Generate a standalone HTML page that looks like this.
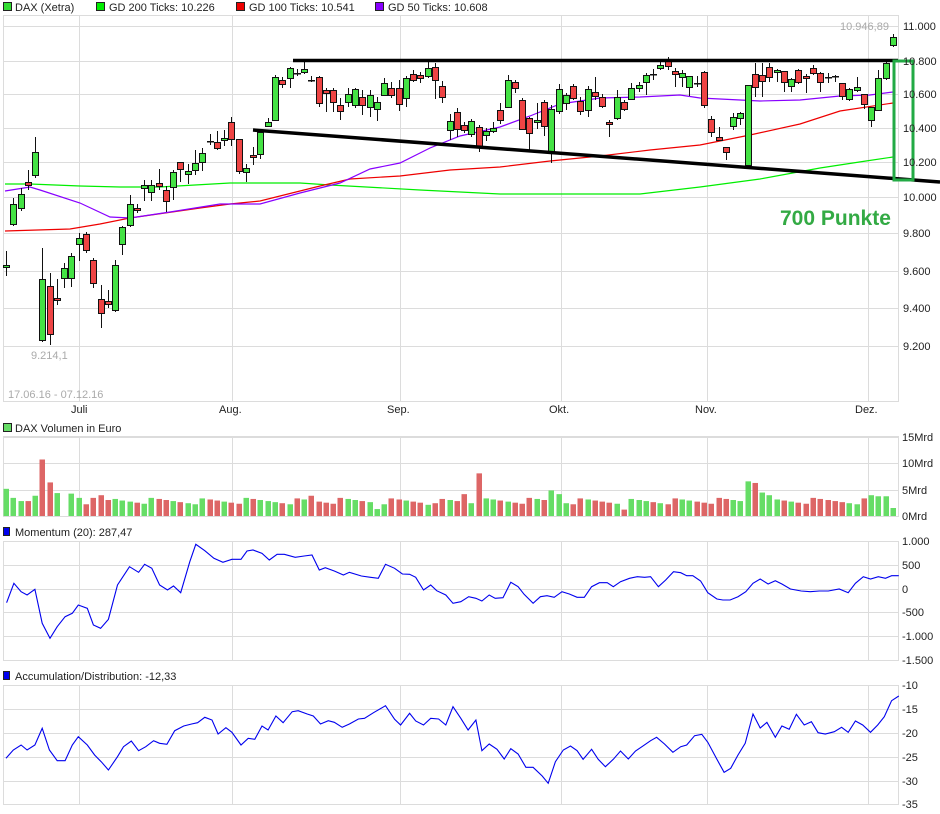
<!DOCTYPE html>
<html><head><meta charset="utf-8"><style>
html,body{margin:0;padding:0;background:#fff;}
svg{display:block;font-family:"Liberation Sans",sans-serif;}
</style></head><body>
<svg id="s" width="940" height="814" xmlns="http://www.w3.org/2000/svg">
<rect width="940" height="814" fill="#fff"/>
<g font-size="11" fill="#222">
<rect x="3.5" y="2.5" width="8" height="8" fill="#33dd33" stroke="#222"/><text x="15" y="11">DAX (Xetra)</text>
<rect x="96.5" y="2.5" width="8" height="8" fill="#00ee00" stroke="#222"/><text x="109" y="11">GD 200 Ticks: 10.226</text>
<rect x="236.5" y="2.5" width="8" height="8" fill="#ee0000" stroke="#222"/><text x="249" y="11">GD 100 Ticks: 10.541</text>
<rect x="375.5" y="2.5" width="8" height="8" fill="#8800ff" stroke="#222"/><text x="388" y="11">GD 50 Ticks: 10.608</text>
</g>
<g id="grid" stroke="#dcdcdc" stroke-width="1" fill="none"></g>
<g id="ma" fill="none" stroke-width="1.2"></g>
<g id="cand"></g>
<g id="lines"></g>
<g font-size="11" fill="#222" id="labels"></g>
</svg>
<script>
var NS="http://www.w3.org/2000/svg";
function el(p,t,a,txt){var e=document.createElementNS(NS,t);for(var k in a)e.setAttribute(k,a[k]);if(txt!=null)e.textContent=txt;document.getElementById(p).appendChild(e);return e;}
var vx=[79,232,400,561,707,868];
var mainY=[26,61,94,128,162,197,233,271,308,346];
var mainL=["11.000","10.800","10.600","10.400","10.200","10.000","9.800","9.600","9.400","9.200"];
el("grid","rect",{x:3.5,y:15.5,width:895,height:386});
mainY.forEach(function(y,i){el("grid","line",{x1:3,x2:898,y1:y+.5,y2:y+.5});el("labels","text",{x:903,y:y+4},mainL[i]);});
vx.forEach(function(x){el("grid","line",{x1:x+.5,x2:x+.5,y1:15,y2:401});});
var mon=[["Juli",71],["Aug.",219],["Sep.",387],["Okt.",549],["Nov.",695],["Dez.",855]];
mon.forEach(function(m){el("labels","text",{x:m[1],y:413},m[0]);});
el("labels","text",{x:840,y:30,fill:"#aaa"},"10.946,89");
el("labels","text",{x:31,y:359,fill:"#aaa"},"9.214,1");
el("labels","text",{x:8,y:398,fill:"#aaa"},"17.06.16 - 07.12.16");
el("grid","rect",{x:3.5,y:436.5,width:895,height:80});
[["15Mrd",437],["10Mrd",463],["5Mrd",490],["0Mrd",516]].forEach(function(a){el("grid","line",{x1:3,x2:898,y1:a[1]+.5,y2:a[1]+.5});el("labels","text",{x:902,y:a[1]+4},a[0]);});
vx.forEach(function(x){el("grid","line",{x1:x+.5,x2:x+.5,y1:437,y2:516});});
el("labels","rect",{x:3.5,y:423.5,width:8,height:8,fill:"#66dd66",stroke:"#222"});
el("labels","text",{x:15,y:432},"DAX Volumen in Euro");
el("grid","rect",{x:3.5,y:541.5,width:895,height:119});
[["1.000",541],["500",565],["0",589],["-500",612],["-1.000",636],["-1.500",660]].forEach(function(a){el("grid","line",{x1:3,x2:898,y1:a[1]+.5,y2:a[1]+.5});el("labels","text",{x:902,y:a[1]+4},a[0]);});
vx.forEach(function(x){el("grid","line",{x1:x+.5,x2:x+.5,y1:541,y2:660});});
el("labels","rect",{x:3.5,y:527.5,width:6,height:8,fill:"#0000ee",stroke:"#222"});
el("labels","text",{x:15,y:536},"Momentum (20): 287,47");
el("grid","rect",{x:3.5,y:685.5,width:895,height:119});
[["-10",685],["-15",709],["-20",733],["-25",757],["-30",781],["-35",804]].forEach(function(a){el("grid","line",{x1:3,x2:898,y1:a[1]+.5,y2:a[1]+.5});el("labels","text",{x:902,y:a[1]+4},a[0]);});
vx.forEach(function(x){el("grid","line",{x1:x+.5,x2:x+.5,y1:685,y2:804});});
el("labels","rect",{x:3.5,y:671.5,width:6,height:8,fill:"#0000ee",stroke:"#222"});
el("labels","text",{x:15,y:680},"Accumulation/Distribution: -12,33");

var C=[[265,267,251,276,'g'],[204,224,198,226,'g'],[194,208,188,211,'g'],[182,185,170,190,'r'],[152,175,137,178,'g'],
[279,340,248,342,'g'],[286,334,273,345,'r'],[298,300,279,305,'r'],[268,278,263,288,'g'],[256,278,253,287,'g'],
[238,244,233,261,'g'],[234,250,232,253,'r'],[260,283,258,288,'r'],[299,313,285,328,'r'],[301,304,290,308,'r'],
[265,310,260,312,'g'],[227,244,226,255,'g'],[204,225,195,227,'g'],[208,210,204,213,'r'],[185,188,180,201,'g'],
[185,192,180,201,'g'],[183,186,169,190,'r'],[190,201,186,212,'r'],[172,187,170,200,'g'],[162,169,162,182,'r'],
[171,174,164,184,'g'],[163,170,150,175,'g'],[153,162,148,171,'g'],[141,142,134,145,'k'],[142,148,131,150,'r'],
[138,140,130,146,'g'],[122,139,117,146,'r'],[139,171,139,174,'r'],[168,172,164,182,'g'],[155,157,147,165,'r'],
[132,154,129,159,'g'],[122,126,118,127,'g'],[77,120,75,121,'g'],[80,84,77,88,'r'],[68,78,67,88,'g'],
[73,73,69,76,'k'],[69,72,62,74,'g'],[80,81,76,82,'k'],[77,103,76,107,'r'],[90,93,88,112,'r'],
[90,102,88,112,'r'],[105,111,98,120,'r'],[94,102,88,107,'g'],[89,105,88,108,'g'],[97,105,90,115,'r'],
[95,107,90,117,'g'],[102,109,97,121,'g'],[83,95,78,95,'g'],[88,95,82,98,'r'],[88,104,80,111,'r'],
[78,98,76,107,'g'],[74,80,70,82,'r'],[75,78,72,83,'r'],[68,76,62,78,'g'],[67,80,63,99,'r'],
[86,97,81,103,'r'],[121,130,114,140,'g'],[112,129,108,137,'r'],[125,130,122,133,'r'],[121,134,119,137,'g'],
[127,147,125,152,'r'],[131,135,128,141,'g'],[128,131,122,133,'g'],[110,120,103,124,'r'],[80,107,75,108,'g'],
[82,88,80,93,'r'],[100,129,98,130,'r'],[118,133,117,150,'r'],[120,122,103,129,'g'],[102,126,100,136,'r'],
[109,152,105,163,'g'],[89,111,84,114,'g'],[95,103,93,110,'g'],[86,98,84,100,'r'],[101,111,97,115,'r'],
[89,110,86,117,'g'],[92,96,77,100,'r'],[97,106,94,108,'r'],[122,124,120,137,'r'],[97,118,90,120,'g'],
[102,109,100,111,'r'],[88,99,83,100,'g'],[85,88,82,92,'g'],[75,82,73,95,'g'],[74,74,69,80,'k'],
[65,68,62,70,'g'],[61,66,57,70,'r'],[71,74,68,87,'r'],[73,77,70,87,'g'],[76,87,76,96,'g'],
[83,83,76,87,'k'],[72,105,71,108,'r'],[119,132,116,137,'r'],[137,140,127,140,'r'],[147,152,147,160,'r'],
[117,126,113,130,'g'],[113,118,112,125,'g'],[85,165,85,168,'g'],[74,87,63,97,'r'],[75,81,63,97,'r'],
[67,77,63,82,'r'],[70,72,69,82,'g'],[71,82,71,92,'r'],[79,86,78,92,'g'],[70,82,69,84,'r'],
[76,78,74,93,'r'],[68,73,65,75,'r'],[73,82,72,92,'r'],[77,77,73,83,'k'],[76,76,75,82,'k'],
[83,96,83,100,'r'],[89,99,88,101,'g'],[87,90,77,92,'g'],[94,104,94,109,'r'],[107,120,107,127,'g'],
[78,110,70,111,'g'],[63,78,60,80,'g'],[37,45,34,47,'g']];
var step=(893-6)/122;
var col={g:"#44e244",r:"#ee4444",k:"#222"};
var vols={0:5.1,1:3.4,2:2.8,3:2.8,4:3.8,5:10.6,6:6.3,7:4.3,8:0,9:4.2,10:3.4,11:2.2,12:3.4,13:3.9,14:3.0,15:3.2,
42:3.8,51:1.3,58:2.1,59:2.4,63:4.1,65:8.0,75:4.8,76:4.1,85:1.2,102:6.5,103:6.2,104:4.4,105:3.9,122:1.5,119:3.9,120:3.7,121:3.7};
var vcolOver={5:'r',6:'r',7:'g',9:'g',10:'g',65:'r',75:'g',76:'g',102:'g',103:'r',104:'g',105:'g'};
function poly(g,pts,color,w){el(g,"polyline",{points:pts.map(function(p){return p[0]+","+p[1]}).join(" "),stroke:color,"stroke-width":w||1.2,fill:"none"});}
poly("ma",[[5,184],[30,184],[80,186],[120,187],[160,187],[230,183],[300,183],[330,185],[420,190],[500,194],[640,194],[700,187],[760,179],[820,168],[866,161],[893,157]],"#00ee00");
poly("ma",[[5,231],[70,229],[100,224],[130,218],[200,208],[230,204],[260,201],[320,186],[350,179],[400,176],[450,170],[500,167],[550,161],[600,156],[650,150],[700,145],[750,135],[800,124],[840,111],[893,103]],"#ee0000");
poly("ma",[[5,191],[30,187],[40,190],[80,203],[110,217],[130,218],[170,212],[220,204],[260,204],[300,193],[340,183],[370,169],[400,163],[430,148],[460,136],[500,127],[530,116],[560,104],[600,98],[640,97],[680,95],[700,98],[760,101],[800,100],[840,96],[870,95],[893,92]],"#8800ff");
C.forEach(function(c,i){
  var x=Math.round(6+i*step);
  el("cand","line",{x1:x+.5,x2:x+.5,y1:c[2],y2:c[3],stroke:"#111","stroke-width":1});
  var h=Math.max(1,c[1]-c[0]);
  if(c[4]=='k'){el("cand","rect",{x:x-3,y:c[0],width:7,height:1.5,fill:"#111"});}
  else el("cand","rect",{x:x-2.5,y:c[0]+.5,width:6,height:h,fill:col[c[4]],stroke:"#111","stroke-width":1});
  var v=(i in vols)?vols[i]:(2.2+((i*37)%13)/10);
  if(v>0){var vh=v*5.33;var t=vcolOver[i]||(c[4]=='k'?'r':c[4]);
  el("cand","rect",{x:x-2.5,y:516-vh,width:5.5,height:vh,fill:t=='g'?"#66dd66":"#dd6666"});}
});
el("lines","line",{x1:293,y1:60.5,x2:898,y2:60.5,stroke:"#000","stroke-width":3.5});
el("lines","line",{x1:253,y1:130,x2:940,y2:182,stroke:"#000","stroke-width":3.5});
el("lines","rect",{x:894,y:61,width:19,height:119,fill:"none",stroke:"#22aa44","stroke-width":3});
el("lines","text",{x:780,y:225,"font-size":21,"font-weight":"bold",fill:"#33aa44"},"700 Punkte");
var M=[[11,248],[23,190],[35,215],[45,225],[58,208],[70,310],[83,355],[95,320],[108,290],[120,280],[130,255],[145,265],[155,315],[167,325],[180,298],[195,195],[215,140],[230,157],[240,133],[252,145],[265,195],[278,210],[288,198],[300,218],[315,125],[325,73],[340,92],[355,115],[370,127],[385,118],[400,118],[410,93],[420,90],[435,100],[447,120],[460,103],[472,103],[490,112],[505,108],[518,105],[530,150],[540,143],[555,153],[570,165],[580,157],[600,168],[615,172],[628,175],[640,133],[655,145],[668,162],[680,163],[690,172],[703,210],[715,195],[725,212],[740,225],[752,250],[765,245],[778,230],[790,235],[800,243],[812,225],[822,235],[835,233],[848,187],[860,200],[870,223],[885,250],[897,230],[908,227],[920,232],[933,215],[945,222],[958,232],[970,232],[982,200],[995,188],[1008,188],[1018,200],[1030,185],[1045,175],[1058,170],[1070,172],[1080,170],[1093,200],[1105,180],[1118,155],[1130,158],[1140,167],[1150,167],[1163,183],[1175,218],[1190,237],[1200,240],[1212,240],[1225,230],[1238,215],[1250,190],[1262,177],[1275,192],[1287,182],[1298,192],[1312,207],[1330,213],[1345,215],[1360,213],[1375,213],[1393,207],[1408,218],[1420,190],[1433,170],[1445,177],[1458,170],[1470,175],[1480,167],[1492,167]];
poly("lines",M.map(function(p){return [(p[0]/1.66).toFixed(1),(520+p[1]/3).toFixed(1)]}),"#0000ee",1.1);
var A=[[10,715],[22,690],[35,675],[45,690],[58,675],[70,625],[82,690],[95,722],[108,722],[120,675],[130,650],[145,675],[157,705],[168,725],[180,750],[195,710],[205,680],[218,663],[230,692],[242,680],[255,662],[265,670],[277,673],[290,632],[305,618],[318,612],[328,608],[340,592],[352,600],[362,642],[375,623],[385,637],[400,675],[412,655],[423,658],[435,618],[445,630],[458,588],[470,608],[485,575],[495,572],[510,582],[520,588],[532,612],[545,602],[555,607],[568,622],[580,612],[595,597],[605,595],[620,578],[640,557],[655,598],[665,615],[680,580],[690,603],[703,615],[715,595],[728,597],[740,615],[752,560],[765,595],[777,630],[790,600],[800,692],[812,672],[825,688],[837,717],[848,686],[860,702],[873,742],[885,742],[900,768],[910,790],[922,725],[935,690],[947,678],[958,692],[968,718],[982,688],[993,718],[1005,740],[1018,718],[1030,693],[1043,717],[1055,693],[1068,677],[1080,662],[1090,652],[1103,672],[1117,697],[1130,680],[1140,675],[1153,647],[1165,643],[1175,667],[1190,718],[1202,757],[1213,745],[1225,705],[1237,670],[1250,582],[1262,624],[1273,607],[1287,652],[1298,618],[1310,628],[1322,583],[1335,615],[1347,605],[1358,638],[1370,642],[1385,635],[1397,622],[1408,637],[1420,603],[1432,615],[1445,637],[1457,615],[1468,590],[1480,542],[1492,528]];
poly("lines",A.map(function(p){return [(p[0]/1.66).toFixed(1),(520+p[1]/3).toFixed(1)]}),"#0000ee",1.1);
</script>
</body></html>
